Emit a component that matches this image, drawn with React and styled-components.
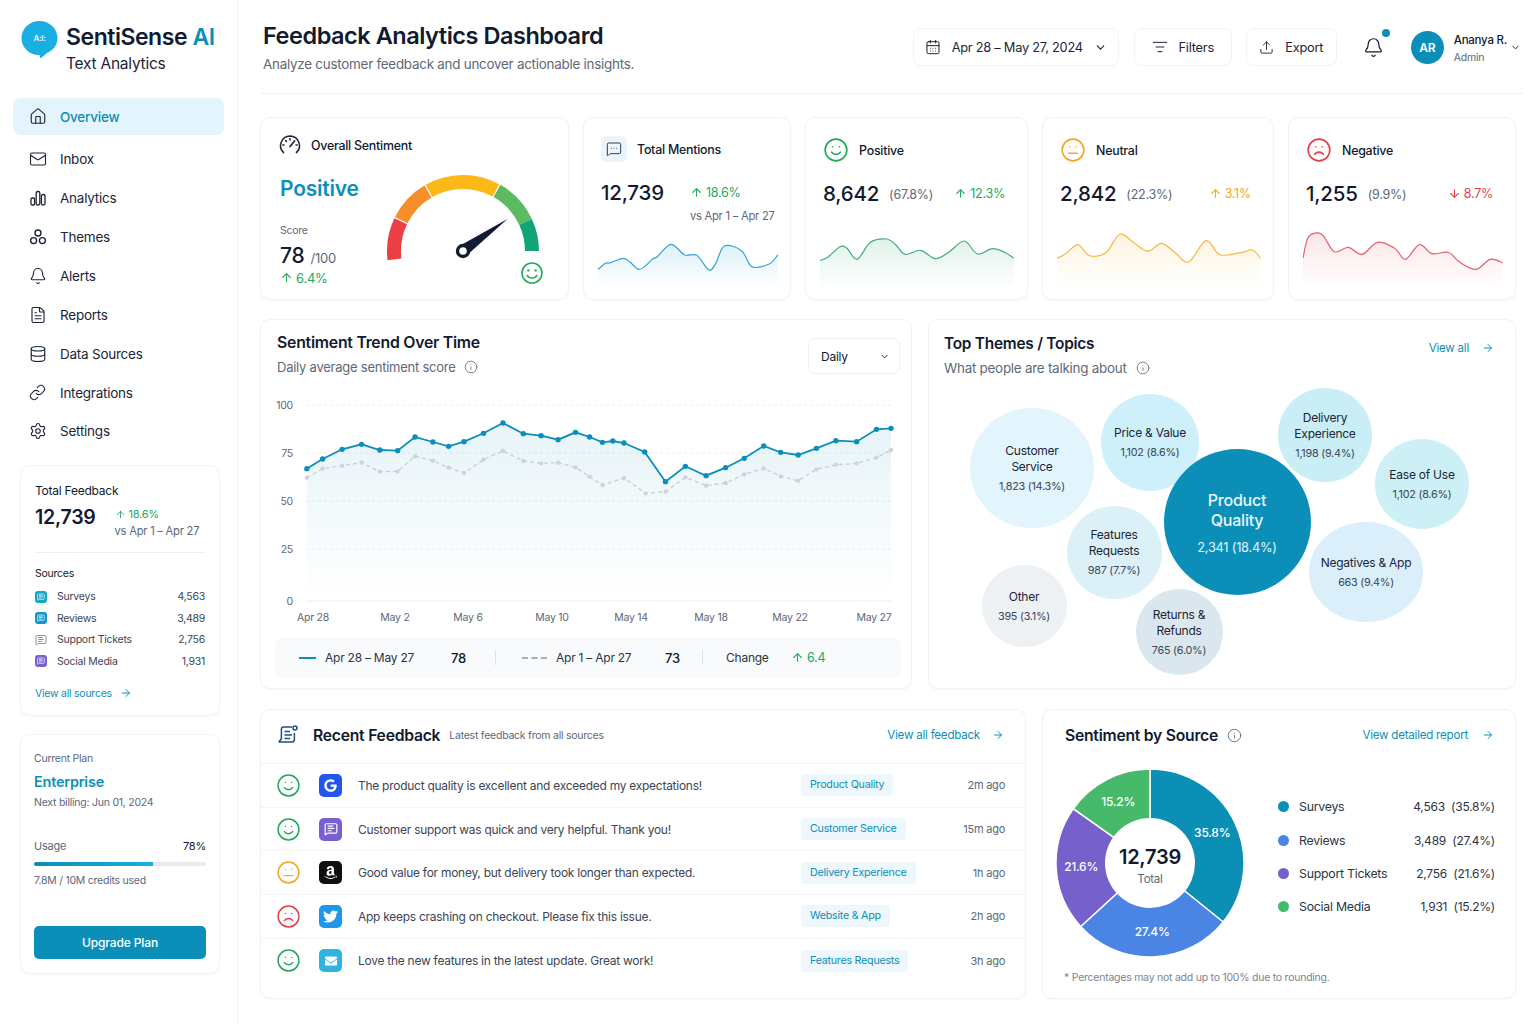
import React from "react";
import styled, { createGlobalStyle } from "styled-components";
import {
  House, Mail, Bell, FileText, Database, Link, Settings, CalendarDays, ListFilter, Upload,
  ChevronDown, MessageSquareMore, MessageSquareText, Smile, Meh, Frown, ArrowUp, ArrowDown, ArrowRight, Info,
} from "lucide-react";
import { FaTwitter, FaAmazon, FaGoogle, FaEnvelope } from "react-icons/fa";

const ink = "#111a2e";
const grey = "#5d6878";
const teal = "#0b8fb9";
const green = "#22a95c";
const amber = "#f5a623";
const red = "#e5404a";

const GlobalStyle = createGlobalStyle`
  html, body { margin: 0; background: #fff; }
  body { font-family: Inter, "Noto Sans", sans-serif; color: ${ink}; letter-spacing: -0.015em; }
  * { box-sizing: border-box; }
`;

// catmull-rom through the points, reads nicer than straight segments
const smooth = (pts) => {
  let d = `M${pts[0][0]} ${pts[0][1]}`;
  for (let i = 0; i < pts.length - 1; i++) {
    const p0 = pts[i - 1] || pts[i];
    const p1 = pts[i];
    const p2 = pts[i + 1];
    const p3 = pts[i + 2] || p2;
    const c1x = p1[0] + (p2[0] - p0[0]) / 6;
    const c1y = p1[1] + (p2[1] - p0[1]) / 6;
    const c2x = p2[0] - (p3[0] - p1[0]) / 6;
    const c2y = p2[1] - (p3[1] - p1[1]) / 6;
    d += ` C${c1x.toFixed(1)} ${c1y.toFixed(1)} ${c2x.toFixed(1)} ${c2y.toFixed(1)} ${p2[0].toFixed(1)} ${p2[1].toFixed(1)}`;
  }
  return d;
};

const polar = (cx, cy, r, deg) => {
  const a = (deg * Math.PI) / 180;
  return [cx + r * Math.cos(a), cy - r * Math.sin(a)];
};

const arc = (cx, cy, r, from, to) => {
  const [x1, y1] = polar(cx, cy, r, from);
  const [x2, y2] = polar(cx, cy, r, to);
  return `M${x1} ${y1} A${r} ${r} 0 0 1 ${x2} ${y2}`;
};

/* ---------- sidebar ---------- */

const navItems = [
  { label: "Overview", icon: <House size={19} strokeWidth={1.5} />, active: true },
  { label: "Inbox", icon: <Mail size={18} strokeWidth={1.5} /> },
  {
    label: "Analytics",
    icon: (
      <svg width="18" height="18" viewBox="0 0 18 18" fill="none" stroke="currentColor" strokeWidth="1.3">
        <rect x="2" y="9" width="3.6" height="7" rx="1.2" />
        <rect x="7.2" y="2.5" width="3.6" height="13.5" rx="1.5" />
        <rect x="12.4" y="5.5" width="3.6" height="10.5" rx="1.5" />
      </svg>
    ),
  },
  {
    label: "Themes",
    icon: (
      <svg width="18" height="18" viewBox="0 0 18 18" fill="none" stroke="currentColor" strokeWidth="1.4">
        <circle cx="9" cy="5" r="3" />
        <circle cx="4.6" cy="12.6" r="3" />
        <circle cx="13.4" cy="12.6" r="3" />
      </svg>
    ),
  },
  { label: "Alerts", icon: <Bell size={18} strokeWidth={1.5} /> },
  { label: "Reports", icon: <FileText size={18} strokeWidth={1.5} /> },
  { label: "Data Sources", icon: <Database size={18} strokeWidth={1.5} /> },
  { label: "Integrations", icon: <Link size={17} strokeWidth={1.5} /> },
  { label: "Settings", icon: <Settings size={18} strokeWidth={1.5} /> },
];

const sourceRows = [
  { name: "Surveys", value: "4,563", bg: "#12a5c4" },
  { name: "Reviews", value: "3,489", bg: "#1596c9" },
  { name: "Support Tickets", value: "2,756", bg: "transparent", plain: true },
  { name: "Social Media", value: "1,931", bg: "#7a5fd0" },
];

const Sidebar = () => (
  <SideWrap>
    <Brand>
      <svg width="37" height="38" viewBox="0 0 37 38">
        <path d="M18.5 0C28.5 0 36.5 7.6 36.5 17C36.5 24.5 31.5 29.5 26 32L19.5 37.5L18.5 34C8 34 .5 26.5 .5 17C.5 7.6 8.5 0 18.5 0Z" fill="#19afe3" />
        <text x="18.5" y="19.5" textAnchor="middle" fontSize="8" fontWeight="600" fill="#e6f8ff" fontFamily="Inter, sans-serif">
          A:I:
        </text>
      </svg>
      <BrandText>
        <BrandName>
          SentiSense <span>AI</span>
        </BrandName>
        <BrandSub>Text Analytics</BrandSub>
      </BrandText>
    </Brand>
    <Nav>
      {navItems.map((item) => (
        <NavItem key={item.label} $active={item.active}>
          <NavIcon>{item.icon}</NavIcon>
          {item.label}
        </NavItem>
      ))}
    </Nav>
    <TotalCard>
      <TotalLabel>Total Feedback</TotalLabel>
      <TotalRow>
        <TotalNumber>12,739</TotalNumber>
        <div>
          <Delta $color={green} $size={11}>
            <ArrowUp size={11} /> 18.6%
          </Delta>
          <SmallGrey>vs Apr 1 – Apr 27</SmallGrey>
        </div>
      </TotalRow>
      <SideDivider />
      <SourcesTitle>Sources</SourcesTitle>
      {sourceRows.map((row) => (
        <SourceRow key={row.name}>
          <SourceBadge $bg={row.bg} $plain={row.plain}>
            <MessageSquareText size={row.plain ? 12 : 8} strokeWidth={2} />
          </SourceBadge>
          <SourceName>{row.name}</SourceName>
          <SourceValue>{row.value}</SourceValue>
        </SourceRow>
      ))}
      <SideLink>
        View all sources <ArrowRight size={12} />
      </SideLink>
    </TotalCard>
    <PlanCard>
      <PlanLabel>Current Plan</PlanLabel>
      <PlanName>Enterprise</PlanName>
      <PlanLabel>Next billing: Jun 01, 2024</PlanLabel>
      <UsageRow>
        <span>Usage</span>
        <strong>78%</strong>
      </UsageRow>
      <UsageTrack>
        <UsageFill $pct={69} />
      </UsageTrack>
      <PlanLabel>7.8M / 10M credits used</PlanLabel>
      <UpgradeButton>Upgrade Plan</UpgradeButton>
    </PlanCard>
  </SideWrap>
);

/* ---------- top bar ---------- */

const TopBar = () => (
  <Header>
    <div>
      <PageTitle>Feedback Analytics Dashboard</PageTitle>
      <PageSub>Analyze customer feedback and uncover actionable insights.</PageSub>
    </div>
    <Actions>
      <ActionButton $width={206} $after={15}>
        <CalendarDays size={16} strokeWidth={1.5} />
        <span>Apr 28 – May 27, 2024</span>
        <ChevronDown size={13} />
      </ActionButton>
      <ActionButton $width={98} $after={14}>
        <ListFilter size={16} strokeWidth={1.5} />
        <span>Filters</span>
      </ActionButton>
      <ActionButton $width={91} $after={14}>
        <Upload size={15} strokeWidth={1.5} />
        <span>Export</span>
      </ActionButton>
      <BellWrap>
        <Bell size={21} strokeWidth={1.4} />
        <BellDot />
      </BellWrap>
      <Avatar>AR</Avatar>
      <UserText>
        <UserName>Ananya R.</UserName>
        <UserRole>Admin</UserRole>
      </UserText>
      <ChevronDown size={11} />
    </Actions>
  </Header>
);

/* ---------- kpi cards ---------- */

const GaugeDrawing = () => {
  const cx = 83;
  const cy = 85;
  const segments = [
    ["#ec3f43", 187, 154.5],
    ["#f58f2c", 153.5, 120.5],
    ["#fbb817", 119.5, 61.5],
    ["#5cba62", 60.5, 25],
    ["#12a376", 25, 0],
  ];
  return (
    <svg width="170" height="125" viewBox="0 0 170 125" fill="none">
      {segments.map(([color, from, to]) => (
        <path key={color} d={arc(cx, cy, 69, from, to)} stroke={color} strokeWidth="14" />
      ))}
      <path d="M78.5 80.5L127.5 53L86 90Z" fill="#101b34" />
      <circle cx={cx} cy={cy} r="5.5" fill="#fff" stroke="#101b34" strokeWidth="3.4" />
      <circle cx="152" cy="107" r="10" stroke={green} strokeWidth="1.6" />
      <circle cx="148.4" cy="104.4" r="1.2" fill={green} />
      <circle cx="155.6" cy="104.4" r="1.2" fill={green} />
      <path d="M147 109.5C149.5 113 154.5 113 157 109.5" stroke={green} strokeWidth="1.5" strokeLinecap="round" />
    </svg>
  );
};

const DialIcon = () => (
  <svg width="22" height="22" viewBox="0 0 22 22" fill="none" stroke="#1c2538" strokeWidth="1.5" strokeLinecap="round">
    <path d="M4.6 18.6A9.6 9.6 0 0 1 11 2a9.6 9.6 0 0 1 6.4 16.6" />
    <path d="M11 12.5L15.6 7" strokeWidth="1.7" />
    <path d="M11 4.6V6M5 11H3.8M18.2 11H17M6.6 6.6L7.5 7.5" />
  </svg>
);

const Sparkline = ({ id, color, points, scale }) => {
  const x0 = points[0][0];
  const pts = points.map(([x, y]) => [(x - x0) / scale, y / 3 - 122]);
  const width = pts[pts.length - 1][0];
  const line = smooth(pts);
  return (
    <SparkSvg width={width + 2} height="60" viewBox={`0 0 ${width + 2} 60`} fill="none">
      <defs>
        <linearGradient id={id} x1="0" y1="0" x2="0" y2="1">
          <stop offset="0" stopColor={color} stopOpacity=".16" />
          <stop offset="1" stopColor={color} stopOpacity="0" />
        </linearGradient>
      </defs>
      <path d={`${line} L${width} 56 L0 56Z`} fill={`url(#${id})`} />
      <path d={line} stroke={color} strokeWidth="1.2" />
    </SparkSvg>
  );
};

const mentionsTrace = [[993,478],[1015,460],[1030,458],[1065,445],[1085,455],[1110,478],[1130,468],[1150,448],[1165,440],[1205,403],[1245,435],[1280,436],[1315,480],[1335,460],[1360,408],[1410,422],[1440,470],[1490,462],[1515,435]];
const positiveTrace = [[42,452],[60,440],[85,410],[100,415],[122,448],[150,397],[185,387],[205,405],[225,433],[258,421],[290,446],[320,425],[352,393],[380,432],[412,416],[440,428],[458,445]];
const neutralTrace = [[550,445],[570,430],[595,404],[620,437],[655,428],[685,373],[715,398],[745,424],[775,400],[805,430],[833,456],[870,392],[900,434],[945,428],[970,420],[987,445]];
const negativeTrace = [[1078,445],[1090,380],[1118,373],[1145,425],[1175,412],[1205,433],[1238,397],[1275,415],[1298,448],[1328,404],[1355,431],[1390,427],[1415,457],[1450,478],[1480,448],[1507,458]];

const moodCards = [
  { id: "pos", title: "Positive", Face: Smile, color: green, value: "8,642", share: "(67.8%)", delta: "12.3%", Arrow: ArrowUp, trace: positiveTrace, spark: "#3fae78" },
  { id: "neu", title: "Neutral", Face: Meh, color: amber, value: "2,842", share: "(22.3%)", delta: "3.1%", Arrow: ArrowUp, trace: neutralTrace, spark: "#f6b83c" },
  { id: "neg", title: "Negative", Face: Frown, color: red, value: "1,255", share: "(9.9%)", delta: "8.7%", Arrow: ArrowDown, trace: negativeTrace, spark: "#e5606a" },
];

const KpiRow = () => (
  <KpiGrid>
    <Card>
      <OverallHead>
        <DialIcon />
        <KpiTitle>Overall Sentiment</KpiTitle>
      </OverallHead>
      <OverallBody>
        <div>
          <OverallWord>Positive</OverallWord>
          <ScoreLabel>Score</ScoreLabel>
          <ScoreLine>
            <ScoreNumber>78</ScoreNumber>
            <ScoreMax>/100</ScoreMax>
          </ScoreLine>
          <Delta $color={green} $size={13}>
            <ArrowUp size={13} /> 6.4%
          </Delta>
        </div>
        <GaugeSlot>
          <GaugeDrawing />
        </GaugeSlot>
      </OverallBody>
    </Card>
    <SparkCard $pad={17}>
      <KpiHead $top={19}>
        <ChatTile>
          <MessageSquareMore size={16} strokeWidth={1.5} />
        </ChatTile>
        <KpiTitle>Total Mentions</KpiTitle>
      </KpiHead>
      <MentionsBody>
        <KpiNumber>12,739</KpiNumber>
        <MentionsSide>
          <Delta $color={green} $size={12.5}>
            <ArrowUp size={13} /> 18.6%
          </Delta>
          <MentionsNote>vs Apr 1 – Apr 27</MentionsNote>
        </MentionsSide>
      </MentionsBody>
      <Sparkline id="men" color="#2ea6d3" points={mentionsTrace} scale={2.904} />
    </SparkCard>
    {moodCards.map(({ id, title, Face, color, value, share, delta, Arrow, trace, spark }) => (
      <SparkCard key={id} $pad={17}>
        <KpiHead $top={20}>
          <Face size={26} strokeWidth={1.5} color={color} />
          <KpiTitle>{title}</KpiTitle>
        </KpiHead>
        <MoodBody>
          <KpiNumber>{value}</KpiNumber>
          <Share>{share}</Share>
          <MoodDelta>
            <Delta $color={color} $size={12.5}>
              <Arrow size={13} /> {delta}
            </Delta>
          </MoodDelta>
        </MoodBody>
        <Sparkline id={id} color={spark} points={trace} scale={2.148} />
      </SparkCard>
    ))}
  </KpiGrid>
);

/* ---------- trend chart ---------- */

const currentLine = [[113,236],[151,207],[198,178],[245,163],[289,180],[332,182],[374,141],[417,156],[455,169],[492,155],[539,130],[586,99],[635,131],[678,137],[719,149],[761,127],[795,141],[826,157],[851,153],[878,159],[928,186],[978,275],[1026,229],[1076,257],[1123,233],[1168,205],[1215,168],[1256,187],[1298,195],[1342,175],[1389,152],[1439,155],[1487,118],[1522,115]];
const previousLine = [[113,263],[151,236],[198,227],[245,218],[289,245],[332,244],[374,199],[417,212],[455,233],[492,249],[539,209],[586,183],[635,213],[678,220],[719,218],[761,232],[795,260],[826,285],[878,264],[930,310],[978,305],[1026,262],[1076,287],[1123,279],[1168,253],[1215,235],[1256,259],[1298,272],[1342,238],[1389,224],[1439,220],[1487,203],[1522,180]];
const toChart = ([x, y]) => [x / 2.412 - 16, y / 3 - 5];

const yTicks = [
  ["100", 10],
  ["75", 58],
  ["50", 106],
  ["25", 154],
  ["0", 206],
];
const xTicks = [["Apr 28", 37], ["May 2", 119], ["May 6", 192], ["May 10", 276], ["May 14", 355], ["May 18", 435], ["May 22", 514], ["May 27", 598]];

const TrendChart = () => {
  const blue = currentLine.map(toChart);
  const gray = previousLine.map(toChart);
  const straight = (pts) => pts.map(([x, y], i) => `${i ? "L" : "M"}${x.toFixed(1)} ${y.toFixed(1)}`).join(" ");
  return (
    <ChartSvg width="620" height="235" viewBox="0 0 620 235" fill="none">
      <defs>
        <linearGradient id="trendFill" x1="0" y1="0" x2="0" y2="1">
          <stop offset="0" stopColor={teal} stopOpacity=".1" />
          <stop offset="1" stopColor={teal} stopOpacity="0" />
        </linearGradient>
      </defs>
      {yTicks.map(([label, y]) => (
        <g key={label}>
          <text x="17" y={y + 4} textAnchor="end" fontSize="10.5" fill="#5d6878">{label}</text>
          <line x1="30" x2="616" y1={y} y2={y} stroke="#e9edf1" strokeWidth="1" strokeDasharray={label === "0" ? "0" : "3 3"} />
        </g>
      ))}
      <path d={`${straight(blue)} L${blue[blue.length - 1][0]} 206 L${blue[0][0]} 206Z`} fill="url(#trendFill)" />
      <path d={straight(gray)} stroke="#c9ced4" strokeWidth="1.3" strokeDasharray="4 3" />
      {gray.map(([x, y]) => (
        <circle key={x} cx={x} cy={y} r="2.2" fill="#d0d4d9" />
      ))}
      <path d={straight(blue)} stroke={teal} strokeWidth="1.8" />
      {blue.map(([x, y]) => (
        <circle key={x} cx={x} cy={y} r="2.7" fill={teal} />
      ))}
      {xTicks.map(([label, x]) => (
        <text key={label} x={x} y="226" textAnchor="middle" fontSize="10.5" fill="#5d6878">{label}</text>
      ))}
    </ChartSvg>
  );
};

const TrendCard = () => (
  <Card>
    <TrendHead>
      <div>
        <SectionTitle $size={15.8}>Sentiment Trend Over Time</SectionTitle>
        <SectionSub $size={13} $gap={8}>
          Daily average sentiment score <Info size={14} strokeWidth={1.4} />
        </SectionSub>
      </div>
      <SelectBox>
        Daily <ChevronDown size={11} />
      </SelectBox>
    </TrendHead>
    <TrendChart />
    <LegendStrip>
      <SolidKey />
      <LegendDate $width={126}>Apr 28 – May 27</LegendDate>
      <LegendValue $width={44}>78</LegendValue>
      <StripRule />
      <DashKey />
      <LegendDate $width={109}>Apr 1 – Apr 27</LegendDate>
      <LegendValue $width={37}>73</LegendValue>
      <StripRule />
      <ChangeLabel>Change</ChangeLabel>
      <Delta $color={green} $size={12.5}>
        <ArrowUp size={13} /> 6.4
      </Delta>
    </LegendStrip>
  </Card>
);

/* ---------- themes ---------- */

const bubbles = [
  { x: 103, y: 83, w: 124, h: 120, bg: "#e2f4fc", lines: ["Customer", "Service"], count: "1,823 (14.3%)" },
  { x: 221, y: 57, w: 98, h: 97, bg: "#cdf0fa", lines: ["Price & Value"], count: "1,102 (8.6%)" },
  { x: 396, y: 50, w: 94, h: 94, bg: "#c9eef6", lines: ["Delivery", "Experience"], count: "1,198 (9.4%)" },
  { x: 493, y: 99, w: 94, h: 90, bg: "#cdf0f7", lines: ["Ease of Use"], count: "1,102 (8.6%)" },
  { x: 185, y: 167, w: 95, h: 93, bg: "#dcf0f7", lines: ["Features", "Requests"], count: "987 (7.7%)" },
  { x: 437, y: 187, w: 114, h: 100, bg: "#dbeffb", lines: ["Negatives & App"], count: "663 (9.4%)" },
  { x: 95, y: 221, w: 85, h: 82, bg: "#eef1f4", lines: ["Other"], count: "395 (3.1%)" },
  { x: 250, y: 247, w: 87, h: 86, bg: "#dbe7ee", lines: ["Returns &", "Refunds"], count: "765 (6.0%)" },
  { x: 308, y: 137, w: 147, h: 146, bg: teal, lines: ["Product", "Quality"], count: "2,341 (18.4%)", big: true },
];

const ThemesCard = () => (
  <Card>
    <ThemesHead>
      <div>
        <SectionTitle $size={15.4}>Top Themes / Topics</SectionTitle>
        <SectionSub $size={13.4} $gap={9}>
          What people are talking about <Info size={14} strokeWidth={1.4} />
        </SectionSub>
      </div>
      <ViewLink $gap={13}>
        View all <ArrowRight size={12} />
      </ViewLink>
    </ThemesHead>
    <BubbleField>
      {bubbles.map((b) => (
        <Bubble key={b.count + b.x} $x={b.x} $y={b.y} $w={b.w} $h={b.h} $bg={b.bg} $big={b.big}>
          <BubbleName $big={b.big}>
            {b.lines.map((line) => (
              <div key={line}>{line}</div>
            ))}
          </BubbleName>
          <BubbleCount $big={b.big}>{b.count}</BubbleCount>
        </Bubble>
      ))}
    </BubbleField>
  </Card>
);

/* ---------- recent feedback ---------- */

const feedback = [
  { Face: Smile, color: green, logo: "#2456ee", icon: <FaGoogle size={13} />, text: "The product quality is excellent and exceeded my expectations!", tag: "Product Quality", ago: "2m ago" },
  { Face: Smile, color: green, logo: "#7a5fd0", icon: <MessageSquareText size={14} />, text: "Customer support was quick and very helpful. Thank you!", tag: "Customer Service", ago: "15m ago" },
  { Face: Meh, color: amber, logo: "#0f0f10", icon: <FaAmazon size={15} />, text: "Good value for money, but delivery took longer than expected.", tag: "Delivery Experience", ago: "1h ago" },
  { Face: Frown, color: red, logo: "#1d97ea", icon: <FaTwitter size={15} />, text: "App keeps crashing on checkout. Please fix this issue.", tag: "Website & App", ago: "2h ago" },
  { Face: Smile, color: green, logo: "#2fb4e2", icon: <FaEnvelope size={12} />, text: "Love the new features in the latest update. Great work!", tag: "Features Requests", ago: "3h ago" },
];

const RecentCard = () => (
  <Card>
    <RecentHead>
      <svg width="22" height="22" viewBox="0 0 22 22" fill="none" stroke="#1c4f86" strokeWidth="1.5">
        <path d="M15 3H6.5C5 3 4.4 4 4.4 5.2V14.5L2 18H15C16.5 18 17.4 17 17.4 15.5V9" strokeLinejoin="round" />
        <path d="M7.5 7.5H13M7.5 11H15M7.5 14.5H13" />
        <circle cx="18" cy="4" r="2" />
      </svg>
      <RecentTitle>Recent Feedback</RecentTitle>
      <RecentSub>Latest feedback from all sources</RecentSub>
      <ViewLink $gap={12}>
        View all feedback <ArrowRight size={12} />
      </ViewLink>
    </RecentHead>
    {feedback.map(({ Face, color, logo, icon, text, tag, ago }) => (
      <FeedRow key={text}>
        <Face size={25} strokeWidth={1.4} color={color} />
        <LogoTile $bg={logo}>{icon}</LogoTile>
        <FeedText>{text}</FeedText>
        <TagCell>
          <Tag>{tag}</Tag>
        </TagCell>
        <TimeAgo>{ago}</TimeAgo>
      </FeedRow>
    ))}
  </Card>
);

/* ---------- sentiment by source ---------- */

const slices = [
  { name: "Surveys", value: "4,563", pct: 35.8, color: "#0b8fb4" },
  { name: "Reviews", value: "3,489", pct: 27.4, color: "#4a85e4" },
  { name: "Support Tickets", value: "2,756", pct: 21.6, color: "#7560cc" },
  { name: "Social Media", value: "1,931", pct: 15.2, color: "#46b96b" },
];

const Donut = () => {
  let angle = 90;
  const c = 95;
  return (
    <svg width="190" height="190" viewBox="0 0 190 190">
      {slices.map((s) => {
        const sweep = (s.pct / 100) * 360;
        const from = angle;
        const to = angle - sweep;
        angle = to;
        const large = sweep > 180 ? 1 : 0;
        const [x1, y1] = polar(c, c, 94, from);
        const [x2, y2] = polar(c, c, 94, to);
        const [lx, ly] = polar(c, c, 69, (from + to) / 2);
        return (
          <g key={s.name}>
            <path d={`M${c} ${c} L${x1} ${y1} A94 94 0 ${large} 1 ${x2} ${y2}Z`} fill={s.color} stroke="#fff" strokeWidth="1.5" />
            <text x={lx} y={ly + 4} textAnchor="middle" fontSize="12" fontWeight="500" fill="#fff">{s.pct}%</text>
          </g>
        );
      })}
      <circle cx={c} cy={c} r="45" fill="#fff" />
      <text x={c} y={c + 1} textAnchor="middle" fontSize="20" fontWeight="600" fill={ink}>12,739</text>
      <text x={c} y={c + 20} textAnchor="middle" fontSize="11.5" fill={grey}>Total</text>
    </svg>
  );
};

const SourceCard = () => (
  <Card>
    <SourceHead>
      <RecentTitle>Sentiment by Source</RecentTitle>
      <Info size={15} strokeWidth={1.4} color={grey} />
      <ViewLink $gap={14}>
        View detailed report <ArrowRight size={12} />
      </ViewLink>
    </SourceHead>
    <SourceBody>
      <Donut />
      <SourceLegend>
        {slices.map((s) => (
          <LegendRow key={s.name}>
            <LegendDot $color={s.color} />
            <LegendName>{s.name}</LegendName>
            <LegendFigure>
              {s.value}&nbsp;&nbsp;({s.pct}%)
            </LegendFigure>
          </LegendRow>
        ))}
      </SourceLegend>
    </SourceBody>
    <Footnote>* Percentages may not add up to 100% due to rounding.</Footnote>
  </Card>
);

export default function App() {
  return (
    <Page>
      <GlobalStyle />
      <Sidebar />
      <Main>
        <TopBar />
        <KpiRow />
        <MiddleRow>
          <TrendCard />
          <ThemesCard />
        </MiddleRow>
        <BottomRow>
          <RecentCard />
          <SourceCard />
        </BottomRow>
      </Main>
    </Page>
  );
}

/* ---------- styles ---------- */

const Page = styled.div`
  display: flex;
  width: 1536px;
  height: 1024px;
  overflow: hidden;
  background: #fff;
`;
const SideWrap = styled.aside`
  width: 238px;
  flex: none;
  border-right: 1px solid #f1f3f6;
  padding: 21px 13px 0 13px;
`;
const Brand = styled.div`
  display: flex;
  gap: 8px;
  margin-left: 8px;
  height: 77px;
`;
const BrandText = styled.div`
  padding-top: 1px;
`;
const BrandName = styled.div`
  font-size: 23px;
  font-weight: 600;
  line-height: 30px;
  white-space: nowrap;
  letter-spacing: -0.02em;
  span {
    color: ${teal};
  }
`;
const BrandSub = styled.div`
  font-size: 15.5px;
  line-height: 24px;
  color: #1c2538;
`;
const Nav = styled.nav`
  display: flex;
  flex-direction: column;
  width: 211px;
`;
const NavItem = styled.div`
  display: flex;
  align-items: center;
  gap: 13px;
  padding-left: 16px;
  font-size: 13.5px;
  height: ${(p) => (p.$active ? "37px" : "38.86px")};
  margin-bottom: ${(p) => (p.$active ? "5px" : "0")};
  border-radius: 8px;
  color: ${(p) => (p.$active ? teal : "#1c2538")};
  font-weight: ${(p) => (p.$active ? 500 : 400)};
  background: ${(p) => (p.$active ? "#e4f4fc" : "transparent")};
`;
const NavIcon = styled.span`
  display: flex;
  width: 18px;
  color: #1c2538;
`;
const SideCard = styled.section`
  width: 200px;
  margin-left: 7px;
  border: 1px solid #f1f3f6;
  border-radius: 10px;
  box-shadow: 0 1px 3px rgba(20, 40, 70, 0.03);
  background: #fff;
`;
const TotalCard = styled(SideCard)`
  margin-top: 14px;
  height: 251px;
  padding: 17px 14px 0 14px;
`;
const TotalLabel = styled.div`
  font-size: 12px;
  line-height: 15px;
`;
const TotalRow = styled.div`
  display: flex;
  gap: 19px;
  margin-top: 6px;
`;
const TotalNumber = styled.div`
  font-size: 19.5px;
  font-weight: 600;
  line-height: 26px;
`;
const Delta = styled.div`
  display: inline-flex;
  align-items: center;
  gap: 3px;
  white-space: nowrap;
  font-size: ${(p) => p.$size}px;
  color: ${(p) => p.$color};
`;
const SmallGrey = styled.div`
  font-size: 11.2px;
  color: ${grey};
  line-height: 15px;
  white-space: nowrap;
`;
const SideDivider = styled.div`
  height: 1px;
  background: #eef0f3;
  margin-top: 13px;
`;
const SourcesTitle = styled.div`
  font-size: 10.5px;
  margin: 14px 0 5px;
  line-height: 14px;
`;
const SourceRow = styled.div`
  display: flex;
  align-items: center;
  height: 21.5px;
  font-size: 10.5px;
`;
const SourceBadge = styled.span`
  width: 12px;
  height: 12px;
  border-radius: 3px;
  display: flex;
  align-items: center;
  justify-content: center;
  background: ${(p) => p.$bg};
  color: ${(p) => (p.$plain ? "#8a929c" : "#fff")};
`;
const SourceName = styled.span`
  margin-left: 10px;
  color: #3c4656;
  flex: 1;
`;
const SourceValue = styled.span`
  color: #3c4656;
`;
const SideLink = styled.div`
  display: flex;
  align-items: center;
  gap: 8px;
  margin-top: 15px;
  font-size: 10.5px;
  color: ${teal};
`;
const PlanCard = styled(SideCard)`
  margin-top: 18px;
  height: 240px;
  padding: 17px 13px 0 13px;
`;
const PlanLabel = styled.div`
  font-size: 10.5px;
  line-height: 14px;
  color: ${grey};
`;
const PlanName = styled.div`
  font-size: 14.5px;
  font-weight: 600;
  color: ${teal};
  line-height: 20px;
  margin: 6px 0 4px;
`;
const UsageRow = styled.div`
  display: flex;
  justify-content: space-between;
  font-size: 11px;
  line-height: 14px;
  color: ${grey};
  margin-top: 29px;
  strong {
    font-weight: 400;
    color: ${ink};
  }
`;
const UsageTrack = styled.div`
  height: 4px;
  border-radius: 2px;
  background: #e8ecf0;
  margin: 9px 0 8px;
  overflow: hidden;
`;
const UsageFill = styled.div`
  height: 100%;
  width: ${(p) => p.$pct}%;
  background: linear-gradient(90deg, #0b8fb9, #19afe3);
`;
const UpgradeButton = styled.button`
  display: block;
  width: 172px;
  height: 33px;
  margin-top: 38px;
  border: 0;
  border-radius: 5px;
  background: ${teal};
  color: #fff;
  font: 500 12px Inter, sans-serif;
  letter-spacing: -0.01em;
`;
const Main = styled.main`
  flex: 1;
  padding: 0 20px 0 22px;
`;
const Header = styled.header`
  display: flex;
  justify-content: space-between;
  height: 94px;
  margin-right: -8px;
  padding-left: 3px;
  border-bottom: 1px solid #f0f2f5;
`;
const PageTitle = styled.h1`
  margin: 20px 0 0;
  font-size: 23.5px;
  line-height: 32px;
  font-weight: 600;
  letter-spacing: -0.02em;
`;
const PageSub = styled.p`
  margin: 3px 0 0;
  font-size: 13.4px;
  line-height: 18px;
  color: ${grey};
`;
const Actions = styled.div`
  display: flex;
  align-items: center;
  height: 38px;
  margin-top: 28px;
  margin-right: 3px;
`;
const ActionButton = styled.div`
  display: flex;
  align-items: center;
  justify-content: center;
  gap: 11px;
  width: ${(p) => p.$width}px;
  height: 38px;
  margin-right: ${(p) => p.$after}px;
  border: 1px solid #f0f2f5;
  border-radius: 8px;
  font-size: 12.8px;
  color: #1c2538;
`;
const BellWrap = styled.div`
  position: relative;
  display: flex;
  margin: 0 27px 0 12px;
`;
const BellDot = styled.span`
  position: absolute;
  top: -8px;
  right: -6px;
  width: 8px;
  height: 8px;
  border-radius: 50%;
  background: ${teal};
`;
const Avatar = styled.div`
  width: 33px;
  height: 33px;
  border-radius: 50%;
  display: flex;
  align-items: center;
  justify-content: center;
  background: ${teal};
  color: #fff;
  font-size: 12px;
  font-weight: 600;
`;
const UserText = styled.div`
  margin: 4px 3px 0 10px;
`;
const UserName = styled.div`
  font-size: 11.5px;
  line-height: 15px;
  font-weight: 500;
`;
const UserRole = styled.div`
  font-size: 10.5px;
  line-height: 14px;
  margin-top: 3px;
  color: ${grey};
`;
const Card = styled.section`
  border: 1px solid #f0f2f5;
  border-radius: 10px;
  background: #fff;
  box-shadow: 0 1px 3px rgba(20, 40, 70, 0.03);
  display: flex;
  flex-direction: column;
  min-width: 0;
`;
const KpiGrid = styled.div`
  display: grid;
  grid-template-columns: 309px 208px 223px 232px 228px;
  column-gap: 14px;
  height: 183px;
  margin-top: 23px;
`;
const OverallHead = styled.div`
  display: flex;
  align-items: center;
  gap: 10px;
  padding: 16px 0 0 18px;
`;
const KpiTitle = styled.div`
  font-size: 12.4px;
  font-weight: 500;
`;
const OverallBody = styled.div`
  display: flex;
  padding-left: 19px;
`;
const OverallWord = styled.div`
  font-size: 21px;
  font-weight: 600;
  color: ${teal};
  line-height: 28px;
  margin-top: 19px;
`;
const ScoreLabel = styled.div`
  font-size: 10.5px;
  color: ${grey};
  line-height: 14px;
  margin-top: 21px;
`;
const ScoreLine = styled.div`
  display: flex;
  align-items: baseline;
  gap: 6px;
  margin: 5px 0 0;
`;
const ScoreNumber = styled.span`
  font-size: 21px;
  font-weight: 500;
  line-height: 25px;
`;
const ScoreMax = styled.span`
  font-size: 13px;
  color: ${grey};
`;
const GaugeSlot = styled.div`
  margin: 10px 0 0 auto;
  padding-right: 18px;
`;
const SparkCard = styled(Card)`
  padding: 0 8px 7px ${(p) => p.$pad}px;
`;
const SparkSvg = styled.svg`
  display: block;
  margin-top: auto;
  margin-left: -3px;
`;
const KpiHead = styled.div`
  display: flex;
  align-items: center;
  gap: 10px;
  height: 24px;
  margin-top: ${(p) => p.$top}px;
`;
const ChatTile = styled.div`
  width: 26px;
  height: 26px;
  border-radius: 5px;
  background: #edf5fa;
  display: flex;
  align-items: center;
  justify-content: center;
  color: #1c4060;
`;
const MentionsBody = styled.div`
  display: flex;
  gap: 26px;
  margin-top: 18px;
`;
const MentionsSide = styled.div`
  padding-top: 4px;
`;
const MentionsNote = styled(SmallGrey)`
  margin-top: 6px;
`;
const KpiNumber = styled.div`
  font-size: 20.5px;
  font-weight: 500;
  line-height: 28px;
  letter-spacing: -0.01em;
`;
const MoodBody = styled.div`
  display: flex;
  align-items: center;
  gap: 10px;
  margin-top: 18px;
  padding-right: 14px;
`;
const Share = styled.div`
  font-size: 12.5px;
  color: ${grey};
`;
const MoodDelta = styled.div`
  margin-left: auto;
`;
const MiddleRow = styled.div`
  display: grid;
  grid-template-columns: 652px 588px;
  column-gap: 16px;
  height: 370px;
  margin-top: 19px;
`;
const TrendHead = styled.div`
  display: flex;
  justify-content: space-between;
  padding: 13px 11px 0 16px;
  height: 74px;
`;
const SectionTitle = styled.h2`
  margin: 0;
  font-size: ${(p) => p.$size}px;
  line-height: 20px;
  font-weight: 600;
`;
const SectionSub = styled.div`
  display: flex;
  align-items: center;
  gap: ${(p) => p.$gap}px;
  margin-top: 5px;
  font-size: ${(p) => p.$size}px;
  line-height: 18px;
  color: ${grey};
`;
const SelectBox = styled.div`
  display: flex;
  align-items: center;
  justify-content: space-between;
  width: 92px;
  height: 36px;
  margin-top: 5px;
  padding: 0 9px 0 12px;
  border: 1px solid #eef0f3;
  border-radius: 7px;
  font-size: 12px;
`;
const ChartSvg = styled.svg`
  display: block;
  margin: 1px 0 0 15px;
  font-family: Inter, sans-serif;
`;
const LegendStrip = styled.div`
  display: flex;
  align-items: center;
  height: 41px;
  margin: 7px 10px 0 14px;
  padding-left: 24px;
  border-radius: 8px;
  background: #f8fafb;
  font-size: 12px;
`;
const SolidKey = styled.span`
  width: 17px;
  height: 2px;
  background: ${teal};
  margin-right: 9px;
`;
const DashKey = styled.span`
  width: 25px;
  border-top: 2px dashed #a8aeb6;
  margin-right: 9px;
`;
const LegendDate = styled.span`
  width: ${(p) => p.$width}px;
  color: #2b3545;
`;
const LegendValue = styled.span`
  width: ${(p) => p.$width}px;
  font-size: 13px;
  font-weight: 500;
`;
const StripRule = styled.span`
  width: 1px;
  height: 15px;
  background: #dfe3e8;
  margin-right: 26px;
`;
const ChangeLabel = styled.span`
  width: 65px;
  margin-left: -3px;
  color: #2b3545;
`;
const ViewLink = styled.div`
  display: flex;
  align-items: center;
  align-self: flex-start;
  gap: ${(p) => p.$gap}px;
  margin-left: auto;
  margin-right: 21px;
  height: 20px;
  font-size: 11.6px;
  color: ${teal};
  white-space: nowrap;
`;
const ThemesHead = styled.div`
  display: flex;
  justify-content: space-between;
  padding: 14px 0 0 15px;
  height: 65px;
  ${ViewLink} {
    margin-top: 4px;
  }
`;
const BubbleField = styled.div`
  position: relative;
  flex: 1;
`;
const Bubble = styled.div`
  position: absolute;
  left: ${(p) => p.$x - p.$w / 2}px;
  top: ${(p) => p.$y - p.$h / 2}px;
  width: ${(p) => p.$w}px;
  height: ${(p) => p.$h}px;
  border-radius: 50%;
  background: ${(p) => p.$bg};
  display: flex;
  flex-direction: column;
  align-items: center;
  justify-content: center;
  text-align: center;
`;
const BubbleName = styled.div`
  font-size: ${(p) => (p.$big ? "16px" : "12px")};
  line-height: ${(p) => (p.$big ? "20px" : "15.5px")};
  font-weight: ${(p) => (p.$big ? 500 : 400)};
  color: ${(p) => (p.$big ? "#e9f7fc" : "#1c2538")};
  white-space: nowrap;
`;
const BubbleCount = styled.div`
  font-size: ${(p) => (p.$big ? "12.8px" : "10.8px")};
  margin-top: ${(p) => (p.$big ? "10px" : "6px")};
  color: ${(p) => (p.$big ? "#e2f4fa" : "#3c4656")};
  white-space: nowrap;
`;
const BottomRow = styled.div`
  display: grid;
  grid-template-columns: 766px 474px;
  column-gap: 16px;
  height: 290px;
  margin-top: 20px;
`;
const RecentHead = styled.div`
  display: flex;
  align-items: center;
  height: 54px;
  padding: 0 0 3px 16px;
  border-bottom: 1px solid #f0f2f5;
  ${ViewLink} {
    align-self: center;
  }
`;
const RecentTitle = styled.h2`
  margin: 0 0 0 14px;
  font-size: 15.7px;
  font-weight: 600;
  white-space: nowrap;
`;
const RecentSub = styled.span`
  margin-left: 9px;
  font-size: 10.5px;
  color: ${grey};
`;
const FeedRow = styled.div`
  display: grid;
  grid-template-columns: 43px 39px 443px 1fr auto;
  align-items: center;
  height: 43.7px;
  padding: 0 20px 0 15px;
  border-bottom: 1px solid #f3f4f7;
  &:last-child {
    border-bottom: 0;
  }
`;
const LogoTile = styled.div`
  width: 23px;
  height: 23px;
  border-radius: 5px;
  display: flex;
  align-items: center;
  justify-content: center;
  background: ${(p) => p.$bg};
  color: #fff;
`;
const FeedText = styled.div`
  font-size: 11.95px;
  color: #3c4656;
  white-space: nowrap;
`;
const TagCell = styled.div`
  display: flex;
`;
const Tag = styled.span`
  padding: 4px 9px;
  border-radius: 4px;
  background: #eef7fb;
  font-size: 10.7px;
  line-height: 14px;
  color: ${teal};
  white-space: nowrap;
`;
const TimeAgo = styled.div`
  font-size: 11px;
  color: ${grey};
`;
const SourceHead = styled.div`
  display: flex;
  align-items: center;
  gap: 9px;
  height: 50px;
  padding-left: 8px;
  ${ViewLink} {
    align-self: center;
  }
`;
const SourceBody = styled.div`
  display: flex;
  padding-left: 12px;
  margin-top: 8px;
`;
const SourceLegend = styled.div`
  flex: 1;
  margin: 22px 20px 0 33px;
`;
const LegendRow = styled.div`
  display: flex;
  align-items: center;
  height: 33.4px;
  font-size: 12.3px;
  color: #2b3545;
`;
const LegendDot = styled.span`
  width: 11px;
  height: 11px;
  border-radius: 50%;
  background: ${(p) => p.$color};
  margin-right: 10px;
`;
const LegendName = styled.span`
  flex: 1;
`;
const LegendFigure = styled.span`
  white-space: nowrap;
  font-size: 12px;
`;
const Footnote = styled.div`
  margin: 13px 0 0 21px;
  font-size: 10.5px;
  color: #7a8492;
`;
